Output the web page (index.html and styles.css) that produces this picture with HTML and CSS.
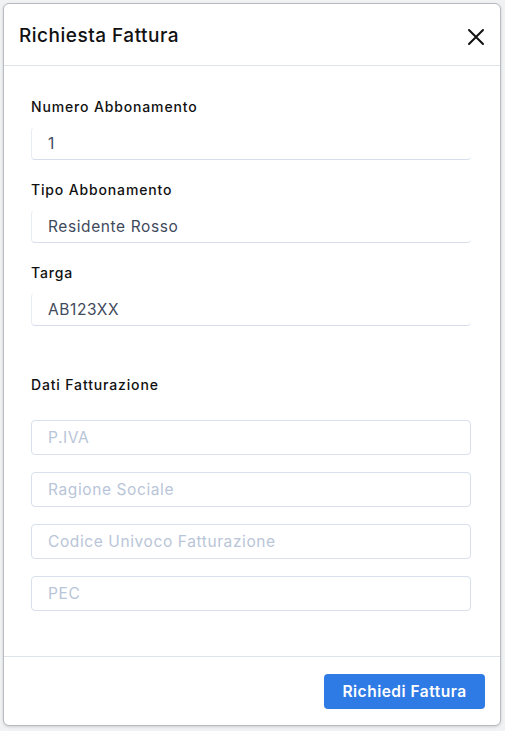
FILE: index.html
```html
<!DOCTYPE html>
<html lang="it">
<head>
<meta charset="utf-8">
<title>Richiesta Fattura</title>
<link rel="stylesheet" href="styles.css">
</head>
<body>
<div class="modal">
  <header class="modal-header">
    <h1 class="modal-title">Richiesta Fattura</h1>
    <button class="close" aria-label="Chiudi">
      <svg width="18" height="18" viewBox="0 0 18 18"><path d="M2 2L16 16M16 2L2 16" stroke="#111" stroke-width="2" stroke-linecap="round"/></svg>
    </button>
  </header>
  <main class="modal-body">
    <div class="group">
      <label class="label">Numero Abbonamento</label>
      <div class="field readonly">1</div>
    </div>
    <div class="group">
      <label class="label">Tipo Abbonamento</label>
      <div class="field readonly">Residente Rosso</div>
    </div>
    <div class="group">
      <label class="label">Targa</label>
      <div class="field readonly">AB123XX</div>
    </div>
    <div class="billing">
      <label class="label">Dati Fatturazione</label>
      <div class="inputs">
        <input class="field input" placeholder="P.IVA">
        <input class="field input" placeholder="Ragione Sociale">
        <input class="field input" placeholder="Codice Univoco Fatturazione">
        <input class="field input" placeholder="PEC">
      </div>
    </div>
  </main>
  <footer class="modal-footer">
    <button class="btn-primary">Richiedi Fattura</button>
  </footer>
</div>
</body>
</html>
```

FILE: styles.css
```css
* { box-sizing: border-box; }
html, body { margin: 0; padding: 0; }
body {
  background: #f1f2f4;
  font-family: "Inter", "Noto Sans", sans-serif;
  width: 505px;
  height: 731px;
  padding: 3px 4px 5px 3px;
  overflow: hidden;
}
.modal {
  background: #fff;
  border: 1px solid #b7bbc2;
  border-radius: 6px;
  height: 723px;
  display: flex;
  flex-direction: column;
  box-shadow: 0 1px 3px rgba(0,0,0,0.15);
}
.modal-header {
  height: 62px;
  border-bottom: 1px solid #dfe3ea;
  display: flex;
  align-items: center;
  justify-content: space-between;
  padding: 0 15px 0 15px;
}
.modal-title {
  margin: 0;
  font-size: 19px;
  font-weight: 500;
  color: #111;
  letter-spacing: 0.5px;
  padding-top: 2px;
}
.close {
  background: none;
  border: 0;
  padding: 0;
  width: 18px;
  height: 18px;
  display: flex;
  margin-top: 4px;
}
.modal-body {
  flex: 1;
  padding: 30px 29px 0 27px;
  display: flex;
  flex-direction: column;
}
.group {
  display: flex;
  flex-direction: column;
  gap: 9px;
  margin-bottom: 19px;
}
.label {
  font-size: 14px;
  font-weight: 500;
  color: #111;
  line-height: 21px;
  letter-spacing: 0.85px;
}
.field {
  height: 34px;
  font-family: inherit;
  font-size: 15.5px;
  letter-spacing: 0.6px;
  color: #3f4a5c;
  padding: 0 16px;
  display: flex;
  align-items: center;
  border-radius: 4px;
}
.readonly {
  border-left: 1px solid #e8edf4;
  border-bottom: 1px solid #d5deea;
  border-top: 1px solid transparent;
  border-top-left-radius: 5px;
  border-bottom-right-radius: 4px;
  background: #fff;
}
.billing {
  margin-top: 29px;
  display: flex;
  flex-direction: column;
  gap: 25px;
}
.inputs {
  display: flex;
  flex-direction: column;
  gap: 17px;
}
.input {
  height: 35px;
  width: 100%;
  border: 1px solid #d7e0ec;
  outline: none;
  background: #fff;
}
.input::placeholder { color: #b9c5d8; }
.modal-footer {
  border-top: 1px solid #dfe3ea;
  height: 69px;
  display: flex;
  align-items: center;
  justify-content: flex-end;
  padding: 0 15px;
}
.btn-primary {
  background: #2f7be5;
  color: #fff;
  border: 0;
  border-radius: 4px;
  width: 161px;
  height: 35px;
  font-family: inherit;
  font-size: 15.5px;
  font-weight: 600;
  letter-spacing: 0.5px;
}
```
